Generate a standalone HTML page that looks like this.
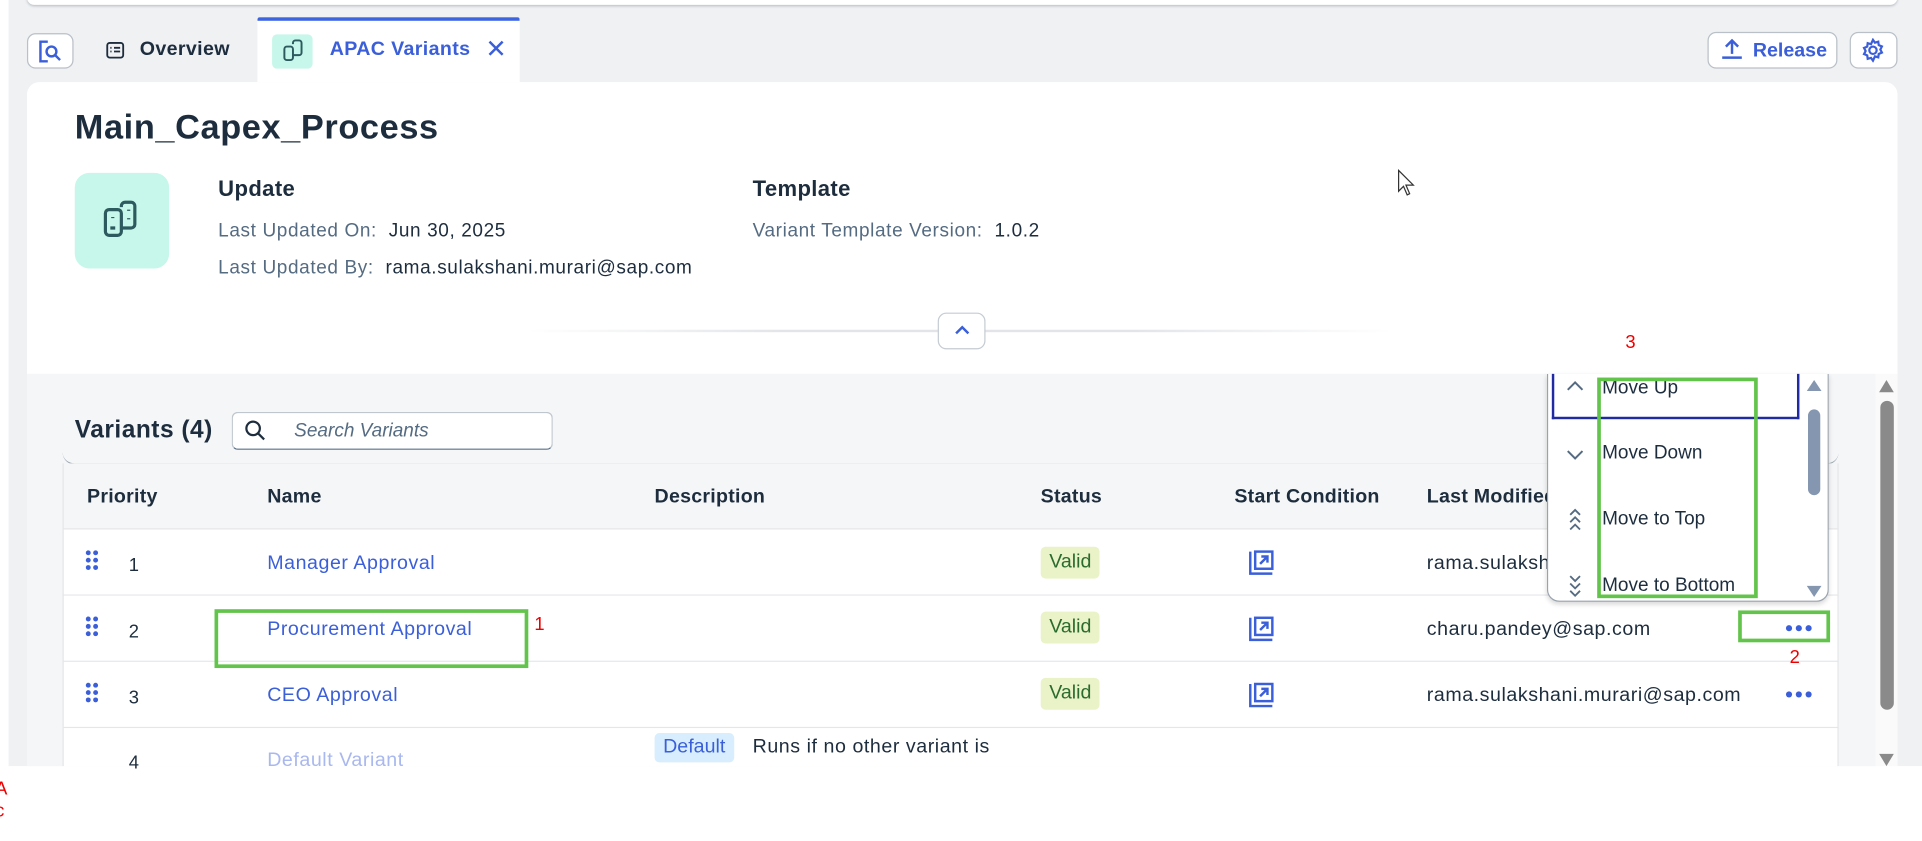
<!DOCTYPE html>
<html><head><meta charset="utf-8"><style>
*{box-sizing:border-box;margin:0;padding:0}
html,body{width:1922px;height:841px;overflow:hidden;background:#fff;font-family:"Liberation Sans",sans-serif}
#s{position:absolute;left:0;top:0;width:1568px;height:686px;transform:scale(1.22577);transform-origin:0 0}
.a{position:absolute}
.b{font-weight:bold}
.g{color:#556b82}
.d{color:#1d2d3e}
.l{color:#3b5fd9}
.hd{font-weight:bold;font-size:16px;color:#1d2d3e;top:397px;letter-spacing:0.2px}
.valid{background:#eaf3c8;color:#2b6b2e;font-size:16px;padding:4px 7px;border-radius:4px}
.row{left:51px;width:1449px;height:54px;background:#fff;border-bottom:1px solid #e4e6e8}
.grip{font-size:0}
.grip i{position:absolute;width:4px;height:4px;border-radius:2px;background:#3b5fd9}
.dot{position:absolute;width:5px;height:5px;border-radius:3px;background:#3b5fd9}
.mi{font-size:15.5px;color:#1d2d3e;left:1306px}
.t{letter-spacing:0.45px}
.m{font-size:15.5px;letter-spacing:0.5px}
</style></head><body><div id="s">
<div class="a" style="left:7px;top:0;width:1561px;height:625px;background:#f0f1f3"></div>
<div class="a" style="left:22px;top:-4px;width:1526px;height:8px;background:#fff;border-radius:0 0 6px 6px;box-shadow:0 1px 2px #b8bcc2"></div>
<!-- tabs -->
<div class="a" style="left:22px;top:27px;width:38px;height:29px;background:#fff;border:1px solid #b9c0c8;border-radius:7px"></div>
<svg class="a" style="left:31px;top:32px" width="20" height="20" viewBox="0 0 20 20" fill="none" stroke="#3b5fd9" stroke-width="2"><path d="M8 2H2v16h6"/><circle cx="11" cy="10" r="4"/><path d="M14 13l4 4"/></svg>
<svg class="a" style="left:86px;top:33px" width="16" height="16" viewBox="0 0 16 16" fill="none" stroke="#1d2d3e" stroke-width="1.5"><rect x="1.5" y="2" width="13" height="12" rx="2"/><path d="M4 6h1M7 6h5M4 9h1M7 9h5"/></svg>
<div class="a b d" style="left:114px;top:32px;font-size:16px;letter-spacing:0.3px">Overview</div>
<div class="a" style="left:210px;top:14px;width:214px;height:53px;background:#fff;border-top:3px solid #3c63e0;border-radius:2px 2px 0 0"></div>
<div class="a" style="left:222px;top:28px;width:33px;height:28px;background:#c6f7ea;border-radius:4px"></div>
<svg class="a" style="left:230px;top:32px" width="18" height="20" viewBox="0 0 18 20" fill="none" stroke="#2d5a5f" stroke-width="1.6"><rect x="2" y="6" width="7" height="11" rx="2"/><path d="M9 4V3a2 2 0 012-2h3a2 2 0 012 2v8a2 2 0 01-2 2H9"/></svg>
<div class="a b l" style="left:269px;top:32px;font-size:16px;letter-spacing:0.3px">APAC Variants</div>
<div class="a l" style="left:396px;top:28px;font-size:21px">✕</div>
<div class="a" style="left:1393px;top:26px;width:106px;height:30px;background:#fff;border:1px solid #b9c0c8;border-radius:7px"></div>
<svg class="a" style="left:1403px;top:30px" width="20" height="20" viewBox="0 0 20 20" fill="none" stroke="#3b5fd9" stroke-width="2"><path d="M10 14V3M5 8l5-5 5 5M2 17h16"/></svg>
<div class="a b l" style="left:1430px;top:33px;font-size:16px">Release</div>
<div class="a" style="left:1509px;top:26px;width:39px;height:30px;background:#fff;border:1px solid #b9c0c8;border-radius:7px"></div>
<svg class="a" style="left:1518px;top:31px" width="20" height="20" viewBox="0 0 20 20" fill="none" stroke="#3b5fd9" stroke-width="1.8"><circle cx="10" cy="10" r="3"/><path d="M10 1.5l1.6 2.3 2.7-.8.4 2.8 2.6 1.1-1.3 2.5 1.3 2.5-2.6 1.1-.4 2.8-2.7-.8L10 18.5l-1.6-2.3-2.7.8-.4-2.8-2.6-1.1L4 10.6 2.7 8.1l2.6-1.1.4-2.8 2.7.8z"/></svg>
<!-- header card -->
<div class="a" style="left:22px;top:67px;width:1526px;height:238px;background:#fff;border-radius:10px 10px 0 0"></div>
<div class="a b d" style="left:61px;top:88px;font-size:28px;letter-spacing:0.5px">Main_Capex_Process</div>
<div class="a" style="left:61px;top:141px;width:77px;height:78px;background:#c6f7ea;border-radius:12px"></div>
<svg class="a" style="left:83px;top:163px" width="34" height="34" viewBox="0 0 34 34" fill="none" stroke="#2d5a5f" stroke-width="2.6"><rect x="3" y="8" width="13" height="21" rx="3"/><path d="M16 6V5a3 3 0 013-3h5a3 3 0 013 3v15a3 3 0 01-3 3h-8"/><path d="M7 23h4M9 14v1M22 8v1M22 15v1"/></svg>
<div class="a b d" style="left:178px;top:144px;font-size:18px;letter-spacing:0.3px">Update</div>
<div class="a m" style="left:178px;top:180px"><span class="g">Last Updated On:</span>&nbsp; <span class="d">Jun 30, 2025</span></div>
<div class="a m" style="left:178px;top:210px"><span class="g">Last Updated By:</span>&nbsp; <span class="d">rama.sulakshani.murari@sap.com</span></div>
<div class="a b d" style="left:614px;top:144px;font-size:18px;letter-spacing:0.3px">Template</div>
<div class="a m" style="left:614px;top:180px"><span class="g">Variant Template Version:</span>&nbsp; <span class="d">1.0.2</span></div>
<div class="a" style="left:430px;top:269px;width:705px;height:2px;background:linear-gradient(90deg,#fff,#e2e4e7 30%,#e2e4e7 70%,#fff)"></div>
<div class="a" style="left:765px;top:255px;width:39px;height:30px;background:#fff;border:1px solid #c5ccd3;border-radius:7px"></div>
<svg class="a" style="left:777px;top:263px" width="16" height="12" viewBox="0 0 16 12" fill="none" stroke="#3b5fd9" stroke-width="2"><path d="M3 9l5-5 5 5"/></svg>
<svg class="a" style="left:1140px;top:138px" width="16" height="24" viewBox="0 0 16 24"><path d="M1 1v17l4-4 3 7 2-1-3-7h6z" fill="#fff" stroke="#333" stroke-width="1"/></svg>
<!-- variants section -->
<div class="a" style="left:22px;top:305px;width:1508px;height:320px;background:#f5f6f7"></div>
<div class="a b d" style="left:61px;top:340px;font-size:20px;letter-spacing:0.4px">Variants (4)</div>
<div class="a" style="left:189px;top:336px;width:262px;height:31px;background:#fff;border:1px solid #bfc6ce;border-bottom:1px solid #556b82;border-radius:5px"></div>
<svg class="a" style="left:199px;top:342px" width="18" height="18" viewBox="0 0 18 18" fill="none" stroke="#1d2d3e" stroke-width="1.8"><circle cx="7.5" cy="7.5" r="5.5"/><path d="M11.5 11.5l5 5"/></svg>
<div class="a g" style="left:240px;top:343px;font-size:15.5px;font-style:italic">Search Variants</div>
<div class="a" style="left:51px;top:368px;width:1449px;height:11px;border-bottom:1px solid #9aa3ad;border-radius:0 0 10px 10px"></div>
<div class="a" style="left:51px;top:378px;width:1449px;height:54px;background:#f5f6f7;border-bottom:1px solid #e4e6e8;border-left:1px solid #e4e6e8"></div>
<div class="a hd" style="left:71px">Priority</div>
<div class="a hd" style="left:218px">Name</div>
<div class="a hd" style="left:534px">Description</div>
<div class="a hd" style="left:849px">Status</div>
<div class="a hd" style="left:1007px">Start Condition</div>
<div class="a hd" style="left:1164px">Last Modified</div>
<!-- rows -->
<div class="a row" style="top:432px"></div>
<div class="a row" style="top:486px"></div>
<div class="a row" style="top:540px"></div>
<div class="a row" style="top:594px;border:none;height:31px"></div>
<div class="a" style="left:51px;top:432px;width:1px;height:193px;background:#e4e6e8"></div>
<div class="a" style="left:1499px;top:378px;width:1px;height:247px;background:#e4e6e8"></div>

<div class="a grip" style="left:70px;top:449px"><i style="left:0;top:0"></i><i style="left:6px;top:0"></i><i style="left:0;top:6px"></i><i style="left:6px;top:6px"></i><i style="left:0;top:12px"></i><i style="left:6px;top:12px"></i></div>
<div class="a grip" style="left:70px;top:503px"><i style="left:0;top:0"></i><i style="left:6px;top:0"></i><i style="left:0;top:6px"></i><i style="left:6px;top:6px"></i><i style="left:0;top:12px"></i><i style="left:6px;top:12px"></i></div>
<div class="a grip" style="left:70px;top:557px"><i style="left:0;top:0"></i><i style="left:6px;top:0"></i><i style="left:0;top:6px"></i><i style="left:6px;top:6px"></i><i style="left:0;top:12px"></i><i style="left:6px;top:12px"></i></div>
<div class="a d" style="left:105px;top:453px;font-size:15px">1</div>
<div class="a d" style="left:105px;top:507px;font-size:15px">2</div>
<div class="a d" style="left:105px;top:561px;font-size:15px">3</div>
<div class="a d" style="left:105px;top:614px;font-size:15px">4</div>
<div class="a l t" style="left:218px;top:451px;font-size:16px">Manager Approval</div>
<div class="a l t" style="left:218px;top:505px;font-size:16px">Procurement Approval</div>
<div class="a l t" style="left:218px;top:559px;font-size:16px">CEO Approval</div>
<div class="a t" style="left:218px;top:612px;font-size:16px;color:#a9b8ee">Default Variant</div>
<div class="a" style="left:534px;top:598px;font-size:16px;background:#d8eefe;color:#3b5fd9;padding:3px 7px;border-radius:4px">Default</div>
<div class="a d t" style="left:614px;top:601px;font-size:16px">Runs if no other variant is</div>
<div class="a valid" style="left:849px;top:446px">Valid</div>
<div class="a valid" style="left:849px;top:499px">Valid</div>
<div class="a valid" style="left:849px;top:553px">Valid</div>
<svg class="a" style="left:1018px;top:448px" width="22" height="22" viewBox="0 0 22 22" fill="none" stroke="#3b5fd9" stroke-width="2"><path d="M2 2v18h18"/><rect x="6" y="2" width="14" height="14"/><path d="M10 12l6-6M11 6h5v5"/></svg>
<svg class="a" style="left:1018px;top:502px" width="22" height="22" viewBox="0 0 22 22" fill="none" stroke="#3b5fd9" stroke-width="2"><path d="M2 2v18h18"/><rect x="6" y="2" width="14" height="14"/><path d="M10 12l6-6M11 6h5v5"/></svg>
<svg class="a" style="left:1018px;top:556px" width="22" height="22" viewBox="0 0 22 22" fill="none" stroke="#3b5fd9" stroke-width="2"><path d="M2 2v18h18"/><rect x="6" y="2" width="14" height="14"/><path d="M10 12l6-6M11 6h5v5"/></svg>
<div class="a d t" style="left:1164px;top:451px;font-size:16px">rama.sulakshani.murari@sap.com</div>
<div class="a d t" style="left:1164px;top:505px;font-size:16px">charu.pandey@sap.com</div>
<div class="a d t" style="left:1164px;top:559px;font-size:16px">rama.sulakshani.murari@sap.com</div>
<div class="dot" style="left:1457px;top:510px"></div><div class="dot" style="left:1465px;top:510px"></div><div class="dot" style="left:1473px;top:510px"></div>
<div class="dot" style="left:1457px;top:564px"></div><div class="dot" style="left:1465px;top:564px"></div><div class="dot" style="left:1473px;top:564px"></div>
<!-- outer scrollbar -->
<div class="a" style="left:1530px;top:305px;width:18px;height:320px;background:#fafafa"></div>
<div class="a" style="left:1533px;top:310px;width:0;height:0;border-left:6px solid transparent;border-right:6px solid transparent;border-bottom:10px solid #8a8a8a"></div>
<div class="a" style="left:1534px;top:327px;width:11px;height:252px;background:#8a8a8a;border-radius:6px"></div>
<div class="a" style="left:1533px;top:615px;width:0;height:0;border-left:6px solid transparent;border-right:6px solid transparent;border-top:10px solid #8a8a8a"></div>
<!-- popup -->
<div class="a" style="left:1262px;top:305px;width:230px;height:186px;background:#fff;border:1px solid #9aa3ad;border-top:none;border-radius:0 0 10px 10px;box-shadow:0 2px 4px rgba(0,0,0,.15)"></div>
<div class="a" style="left:1266px;top:305px;width:202px;height:37px;border:2px solid #1f2aa3;border-top:none"></div>
<svg class="a" style="left:1277px;top:309px" width="16" height="12" viewBox="0 0 16 12" fill="none" stroke="#556b82" stroke-width="1.6"><path d="M2 9l6-6 6 6"/></svg>
<svg class="a" style="left:1277px;top:365px" width="16" height="12" viewBox="0 0 16 12" fill="none" stroke="#556b82" stroke-width="1.6"><path d="M2 3l6 6 6-6"/></svg>
<svg class="a" style="left:1279px;top:414px" width="12" height="20" viewBox="0 0 12 20" fill="none" stroke="#556b82" stroke-width="1.5"><path d="M2 6l4-4 4 4M2 12l4-4 4 4M2 18l4-4 4 4"/></svg>
<svg class="a" style="left:1279px;top:468px" width="12" height="20" viewBox="0 0 12 20" fill="none" stroke="#556b82" stroke-width="1.5"><path d="M2 2l4 4 4-4M2 8l4 4 4-4M2 14l4 4 4-4"/></svg>
<div class="a mi" style="left:1307px;top:308px">Move Up</div>
<div class="a mi" style="left:1307px;top:361px">Move Down</div>
<div class="a mi" style="left:1307px;top:415px">Move to Top</div>
<div class="a mi" style="left:1307px;top:469px">Move to Bottom</div>
<div class="a" style="left:1474px;top:310px;width:0;height:0;border-left:6px solid transparent;border-right:6px solid transparent;border-bottom:9px solid #8496b0"></div>
<div class="a" style="left:1475px;top:334px;width:10px;height:70px;background:#8496b0;border-radius:5px"></div>
<div class="a" style="left:1474px;top:478px;width:0;height:0;border-left:6px solid transparent;border-right:6px solid transparent;border-top:9px solid #8496b0"></div>
<!-- annotations -->
<div class="a" style="left:1303px;top:308px;width:131px;height:180px;border:3px solid #62c44a"></div>
<div class="a" style="left:175px;top:497px;width:256px;height:48px;border:3px solid #62c44a"></div>
<div class="a" style="left:1418px;top:498px;width:75px;height:26px;border:3px solid #62c44a"></div>
<div class="a" style="left:436px;top:501px;font-size:15px;color:#e00">1</div>
<div class="a" style="left:1460px;top:528px;font-size:15px;color:#e00">2</div>
<div class="a" style="left:1326px;top:271px;font-size:15px;color:#e00">3</div>
<div class="a" style="left:-4px;top:635px;font-size:15px;color:#e00;line-height:18px">A<br>c</div>
</div></body></html>
